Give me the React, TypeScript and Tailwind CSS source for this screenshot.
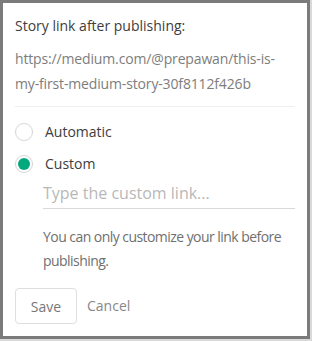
export default function App() {
  return (
    <div className="w-[312px] h-[341px] bg-[#d9d9d9]" style={{ fontFamily: '"Open Sans", "Noto Sans", sans-serif' }}>
      <div className="w-[310px] h-[339px] border-[3px] border-[#7b7b7b] bg-white px-3 pt-[11px]">
        <p className="text-[14px] leading-[24px] text-[#3d3d3d]">Story link after publishing:</p>
        <p className="mt-[8px] text-[14px] leading-[25px] tracking-[-0.15px] text-[#7d7d7d]">
          https://medium.com/@prepawan/this-is-my-first-medium-story-30f8112f426b
        </p>

        <div className="mt-[10px] h-px bg-[#efefef]" />

        <div className="mt-[16px] flex flex-col gap-[14px]">
          <label className="flex items-center gap-[12px]">
            <span className="w-[18px] h-[18px] rounded-full border border-[#d6d6d6] bg-white" />
            <span className="text-[14px] leading-[18px] text-[#3d3d3d]">Automatic</span>
          </label>
          <label className="flex items-center gap-[12px]">
            <span className="w-[18px] h-[18px] rounded-full border border-[#d6d6d6] bg-white flex items-center justify-center">
              <span className="w-[12px] h-[12px] rounded-full bg-[#03a87c]" />
            </span>
            <span className="text-[14px] leading-[18px] text-[#3d3d3d]">Custom</span>
          </label>
        </div>

        <div className="ml-[28px]">
          <input
            className="mt-[9px] w-full border-b border-[#d9d9d9] pb-[4px] text-[16px] leading-[22px] outline-none placeholder:text-[#b8b8b8]"
            placeholder="Type the custom link..."
          />
          <p className="mt-[16px] text-[14px] leading-[24px] tracking-[-0.55px] text-[#6f6f6f]">
            You can only customize your link before publishing.
          </p>
        </div>

        <div className="mt-[15px] flex items-center gap-[10px]">
          <button className="w-[62px] h-[36px] rounded-[4px] border border-[#dedede] text-[14px] text-[#777]">Save</button>
          <button className="text-[14px] text-[#888] -mt-[2px]">Cancel</button>
        </div>
      </div>
    </div>
  );
}
